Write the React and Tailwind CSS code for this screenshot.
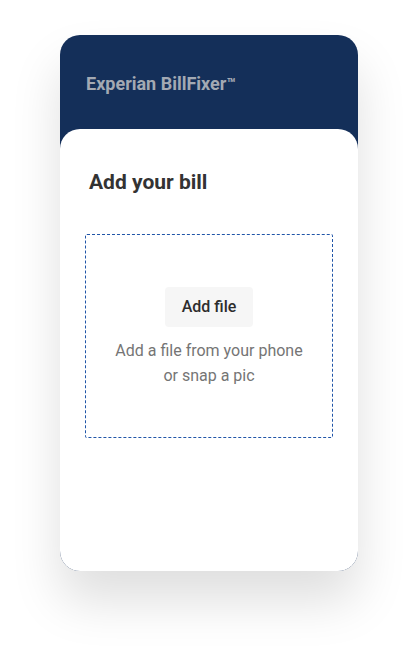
export default function App() {
  return (
    <div className="w-[418px] h-[656px] bg-white flex justify-center pt-[35px]" style={{ fontFamily: 'Roboto, "Liberation Sans", sans-serif' }}>
      <div className="w-[298px] h-[536px] rounded-[20px] bg-[#142f59] flex flex-col shadow-[0_30px_50px_rgba(0,0,0,0.13)]">
        <div className="h-[94px] shrink-0 px-[26px] pt-[38px]">
          <p className="text-[18px] font-bold text-[#a3a9b3] leading-[22px]">
            Experian BillFixer<span className="text-[15px] align-top relative top-[0px]">™</span>
          </p>
        </div>
        <div className="flex-1 bg-white rounded-[20px] px-[25px] pt-[40px]">
          <h2 className="text-[21px] font-bold text-[#333] leading-[26px] px-[4px]">Add your bill</h2>
          <div className="mt-[39px] h-[204px] border border-dashed border-[#2055a8] rounded-[2px] flex flex-col items-center pt-[52px]">
            <button className="w-[88px] h-[40px] bg-[#f6f6f6] rounded-[4px] text-[16px] font-medium text-[#2d2d2d]">
              Add file
            </button>
            <p className="mt-[11px] text-[16px] leading-[25px] text-[#757575] text-center">
              Add a file from your phone<br />or snap a pic
            </p>
          </div>
        </div>
      </div>
    </div>
  )
}
